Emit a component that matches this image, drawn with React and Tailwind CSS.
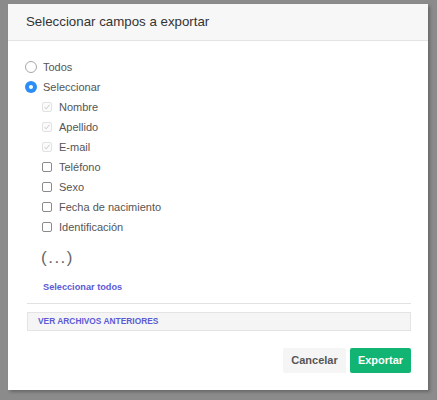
import React, { useState } from "react";

const campos = [
  { name: "Nombre", fixed: true },
  { name: "Apellido", fixed: true },
  { name: "E-mail", fixed: true },
  { name: "Teléfono" },
  { name: "Sexo" },
  { name: "Fecha de nacimiento" },
  { name: "Identificación" },
];

function Radio({ checked, label, onClick }) {
  return (
    <div className="h-[20px] flex items-center gap-[6px] cursor-pointer" onClick={onClick}>
      {checked ? (
        <span className="w-[12px] h-[12px] rounded-full bg-[#2c8ef4] flex items-center justify-center">
          <span className="w-[4px] h-[4px] rounded-full bg-white" />
        </span>
      ) : (
        <span className="w-[12px] h-[12px] rounded-full border border-[#a8a8a8] bg-white" />
      )}
      <span className="text-[11px] text-[#555]">{label}</span>
    </div>
  );
}

function Check({ checked, disabled, label, onClick }) {
  return (
    <div className="h-[20px] flex items-center gap-[7px] cursor-pointer" onClick={onClick}>
      <span
        className={
          disabled
            ? "w-[10px] h-[10px] rounded-[2px] border border-[#e2e2e2] bg-[#fbfbfb] flex items-center justify-center"
            : "w-[10px] h-[10px] rounded-[2px] border border-[#8a8a8a] bg-white flex items-center justify-center"
        }
      >
        {checked && (
          <svg width="8" height="8" viewBox="0 0 8 8">
            <path d="M1.5 4.2 L3.2 5.8 L6.5 1.8" fill="none" stroke={disabled ? "#c8c8c8" : "#555"} strokeWidth="1" />
          </svg>
        )}
      </span>
      <span className="text-[11px] text-[#555]">{label}</span>
    </div>
  );
}

export default function App() {
  const [mode, setMode] = useState("select");
  const [checked, setChecked] = useState({});

  return (
    <div className="h-[400px] bg-[#8b8b8b] pt-[4px] pl-[8px]" style={{ fontFamily: '"Liberation Sans", Arial, sans-serif' }}>
      <div className="w-[420px] h-[386px] bg-white flex flex-col shadow-[2px_2px_3px_rgba(0,0,0,0.25)]">
        <div className="h-[37px] bg-[#f7f7f7] border-b border-[#e4e4e4] flex items-center pl-[18px]">
          <h1 className="text-[13.3px] text-[#333]">Seleccionar campos a exportar</h1>
        </div>

        <div className="pt-[16px] pl-[17px]">
          <Radio label="Todos" checked={mode === "all"} onClick={() => setMode("all")} />
          <Radio label="Seleccionar" checked={mode === "select"} onClick={() => setMode("select")} />
          <div className="pl-[17px]">
            {campos.map((c) => (
              <Check
                key={c.name}
                label={c.name}
                disabled={c.fixed}
                checked={c.fixed || checked[c.name]}
                onClick={() => !c.fixed && setChecked({ ...checked, [c.name]: !checked[c.name] })}
              />
            ))}
          </div>
          <div className="h-[42px] flex items-center pl-[16px] text-[17px] text-[#666] tracking-[1.5px] font-light">(...)</div>
        </div>

        <div className="pl-[19px] pr-[17px]">
          <div className="h-[18px] flex items-center pl-[16px]">
            <a className="text-[9.2px] font-bold text-[#5b5bd6] cursor-pointer">Seleccionar todos</a>
          </div>
          <div className="mt-[6px] border-t border-[#e2e2e2]" />
          <div className="mt-[8px] h-[19px] bg-[#f5f5f5] border border-[#e4e4e4] flex items-center pl-[10px]">
            <span className="text-[8.4px] font-bold text-[#5b5bd6]">VER ARCHIVOS ANTERIORES</span>
          </div>
          <div className="mt-[17px] flex justify-end gap-[4px]">
            <button className="h-[25px] w-[63px] bg-[#f5f5f5] text-[#555] text-[11px] font-bold rounded-[2px]">Cancelar</button>
            <button className="h-[25px] w-[61px] bg-[#12b473] text-white text-[11px] font-bold rounded-[2px]">Exportar</button>
          </div>
        </div>
      </div>
    </div>
  );
}
